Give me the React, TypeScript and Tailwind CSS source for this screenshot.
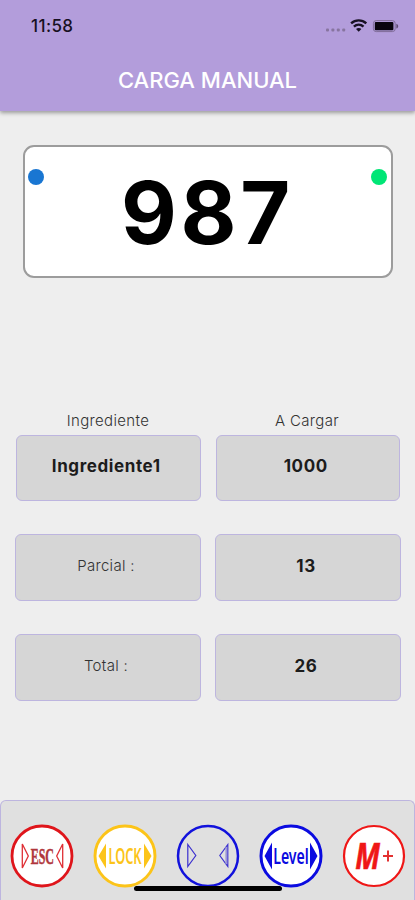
import type { ReactNode } from "react";

function StatusBar() {
  return (
    <div className="flex h-[52px] items-center justify-between pl-[31px] pr-[15px] text-[#171022]">
      <span className="text-[17px] font-medium leading-none tracking-[0.4px]">11:58</span>
      <svg className="h-5 w-[76px]" viewBox="0 0 76 20">
        <g fill="#87749f">
          <rect x="2" y="12.5" width="3" height="3" rx="1" />
          <rect x="7.4" y="12.5" width="3" height="3" rx="1" />
          <rect x="12.8" y="12.5" width="3" height="3" rx="1" />
          <rect x="18.2" y="12.5" width="3" height="3" rx="1" />
        </g>
        <g fill="none" stroke="#171022" strokeWidth="2.4">
          <path d="M27.1 7.3c4.4-3.9 10.8-3.9 15.2 0" />
          <path d="M29.9 10.6c2.8-2.5 6.8-2.5 9.6 0" />
        </g>
        <path d="M32 13c1.6-1.4 3.8-1.4 5.4 0l-2.7 2.8z" fill="#171022" />
        <rect x="49.4" y="4.6" width="21.8" height="11" rx="2.8" fill="none" stroke="#7f6c98" strokeWidth="1" />
        <rect x="50.8" y="6" width="18.6" height="8.2" rx="1" fill="#08040d" />
        <path d="M72.4 7.7c2.4.8 2.4 4 0 4.8z" fill="#5e4c73" />
      </svg>
    </div>
  );
}

function Cell({ children, strong = false, className = "" }: { children: ReactNode; strong?: boolean; className?: string }) {
  return (
    <div
      className={`flex items-center justify-center rounded-[6px] border-[1.5px] border-[#bdb5df] bg-[#d6d6d6] ${
        strong ? "pb-px pr-1 text-[17px] font-bold tracking-[0.6px] text-[#1c1c1c]" : "pb-0.5 pr-1 text-[15px] font-light tracking-[0.3px] text-[#333]"
      } ${className}`}
    >
      {children}
    </div>
  );
}

function Round({ color, fill = "#fff", stroke = 2.6, children }: { color: string; fill?: string; stroke?: number; children: ReactNode }) {
  return (
    <svg className="h-16 w-16 shrink-0" viewBox="0 0 64 64">
      <circle cx="32" cy="32" r="30" fill={fill} stroke={color} strokeWidth={stroke} />
      {children}
    </svg>
  );
}

export default function App() {
  return (
    <div className="flex h-[900px] w-[415px] flex-col overflow-hidden bg-[#eeeeee] font-['Inter',sans-serif]">
      <header className="h-[111px] shrink-0 bg-[#b39ddb] shadow-[0_2px_4px_rgba(0,0,0,0.35)]">
        <StatusBar />
        <h1 className="pt-3 text-center text-[22px] font-medium leading-[32px] text-white">CARGA MANUAL</h1>
      </header>

      <section className="mx-[22.5px] mt-[33.5px] flex h-[133px] shrink-0 items-start justify-between rounded-[11px] border-2 border-[#9c9c9c] bg-white px-[3.5px] pt-[22.5px]">
        <span className="size-4 rounded-full bg-[#1976d2]" />
        <span className="-mt-1.5 text-[86px] font-[660] leading-[100px] tracking-[3.8px] text-black">987</span>
        <span className="size-4 rounded-full bg-[#00e676]" />
      </section>

      <main className="mt-[131px] flex flex-col">
        <div className="mx-[16px] grid grid-cols-2 gap-[15px] text-center text-[15px] font-light leading-[23px] tracking-[0.35px] text-[#333]">
          <span>Ingrediente</span>
          <span>A Cargar</span>
        </div>
        <div className="ml-4 mr-[15px] mt-[3px] grid grid-cols-2 gap-[15px]">
          <Cell strong className="h-[66px]">Ingrediente1</Cell>
          <Cell strong className="h-[66px]">1000</Cell>
        </div>
        <div className="ml-[15px] mr-[14px] mt-[33px] grid grid-cols-2 gap-x-[14px] gap-y-[33px]">
          <Cell className="h-[67px]">Parcial :</Cell>
          <Cell strong className="h-[67px]">13</Cell>
          <Cell className="h-[67px]">Total :</Cell>
          <Cell strong className="h-[67px]">26</Cell>
        </div>
      </main>

      <footer className="relative mt-auto h-[100px] shrink-0 rounded-t-[6px] border-[1.5px] border-b-0 border-[#bdb5df] bg-[#e0e0e0] pl-[9px] pt-[23px]">
        <div className="flex gap-[19px]">
          <Round color="#df151b" stroke={2.8}>
            <g fill="none" stroke="#df3036" strokeWidth="1.3">
              <path d="M12.3 20v24l6-12z" />
              <path d="M52.7 20v24l-6-12z" />
            </g>
            <text transform="translate(32.3 40) scale(.5 1)" textAnchor="middle" fontFamily="Liberation Serif, serif" fontSize="24" fontWeight="700" fill="#b0363b" stroke="#b0363b" strokeWidth="0.5">ESC</text>
          </Round>
          <Round color="#fcc419" stroke={2.9}>
            <path d="M13 19.5v25L5.500 32zM51 19.5v25L58.500 32z" fill="#fcc419" />
            <text transform="translate(32 39.5) scale(.58 1)" textAnchor="middle" fontFamily="Noto Sans, sans-serif" fontSize="22" fontWeight="600" fill="#fcc419">LOCK</text>
          </Round>
          <Round color="#1212dc" fill="none" stroke={2.5}>
            <path d="M11.8 20.5v22l8-11z" fill="none" stroke="#3b30cf" strokeWidth="1.2" />
            <path d="M51.8 20.5v22l-8-11z" fill="none" stroke="#3b30cf" strokeWidth="1.2" />
            <path d="M50.3 23v17" stroke="#9a94d8" strokeWidth="1.8" />
          </Round>
          <Round color="#0b0be0" stroke={3}>
            <path d="M13 18.5v27L5.5 32zM51 18.5v27L58.500 32z" fill="#0b0be0" />
            <text transform="translate(32 39.5) scale(.64 1)" textAnchor="middle" fontFamily="Noto Sans, sans-serif" fontSize="22" fontWeight="600" fill="#0b0be0">Level</text>
          </Round>
          <Round color="#ef1717" stroke={2.2}>
            <text transform="translate(25.5 44.5) scale(.78 1)" textAnchor="middle" fontFamily="Open Sans, sans-serif" fontSize="36" fontStyle="italic" fontWeight="700" fill="#ef1717" stroke="#ef1717" strokeWidth="0.6">M</text>
            <path d="M46 26.500v11M41 32h10" stroke="#e33131" strokeWidth="2" />
          </Round>
        </div>
        <div className="absolute bottom-[9px] left-[133px] h-[5px] w-[148px] rounded-full bg-black" />
      </footer>
    </div>
  );
}
